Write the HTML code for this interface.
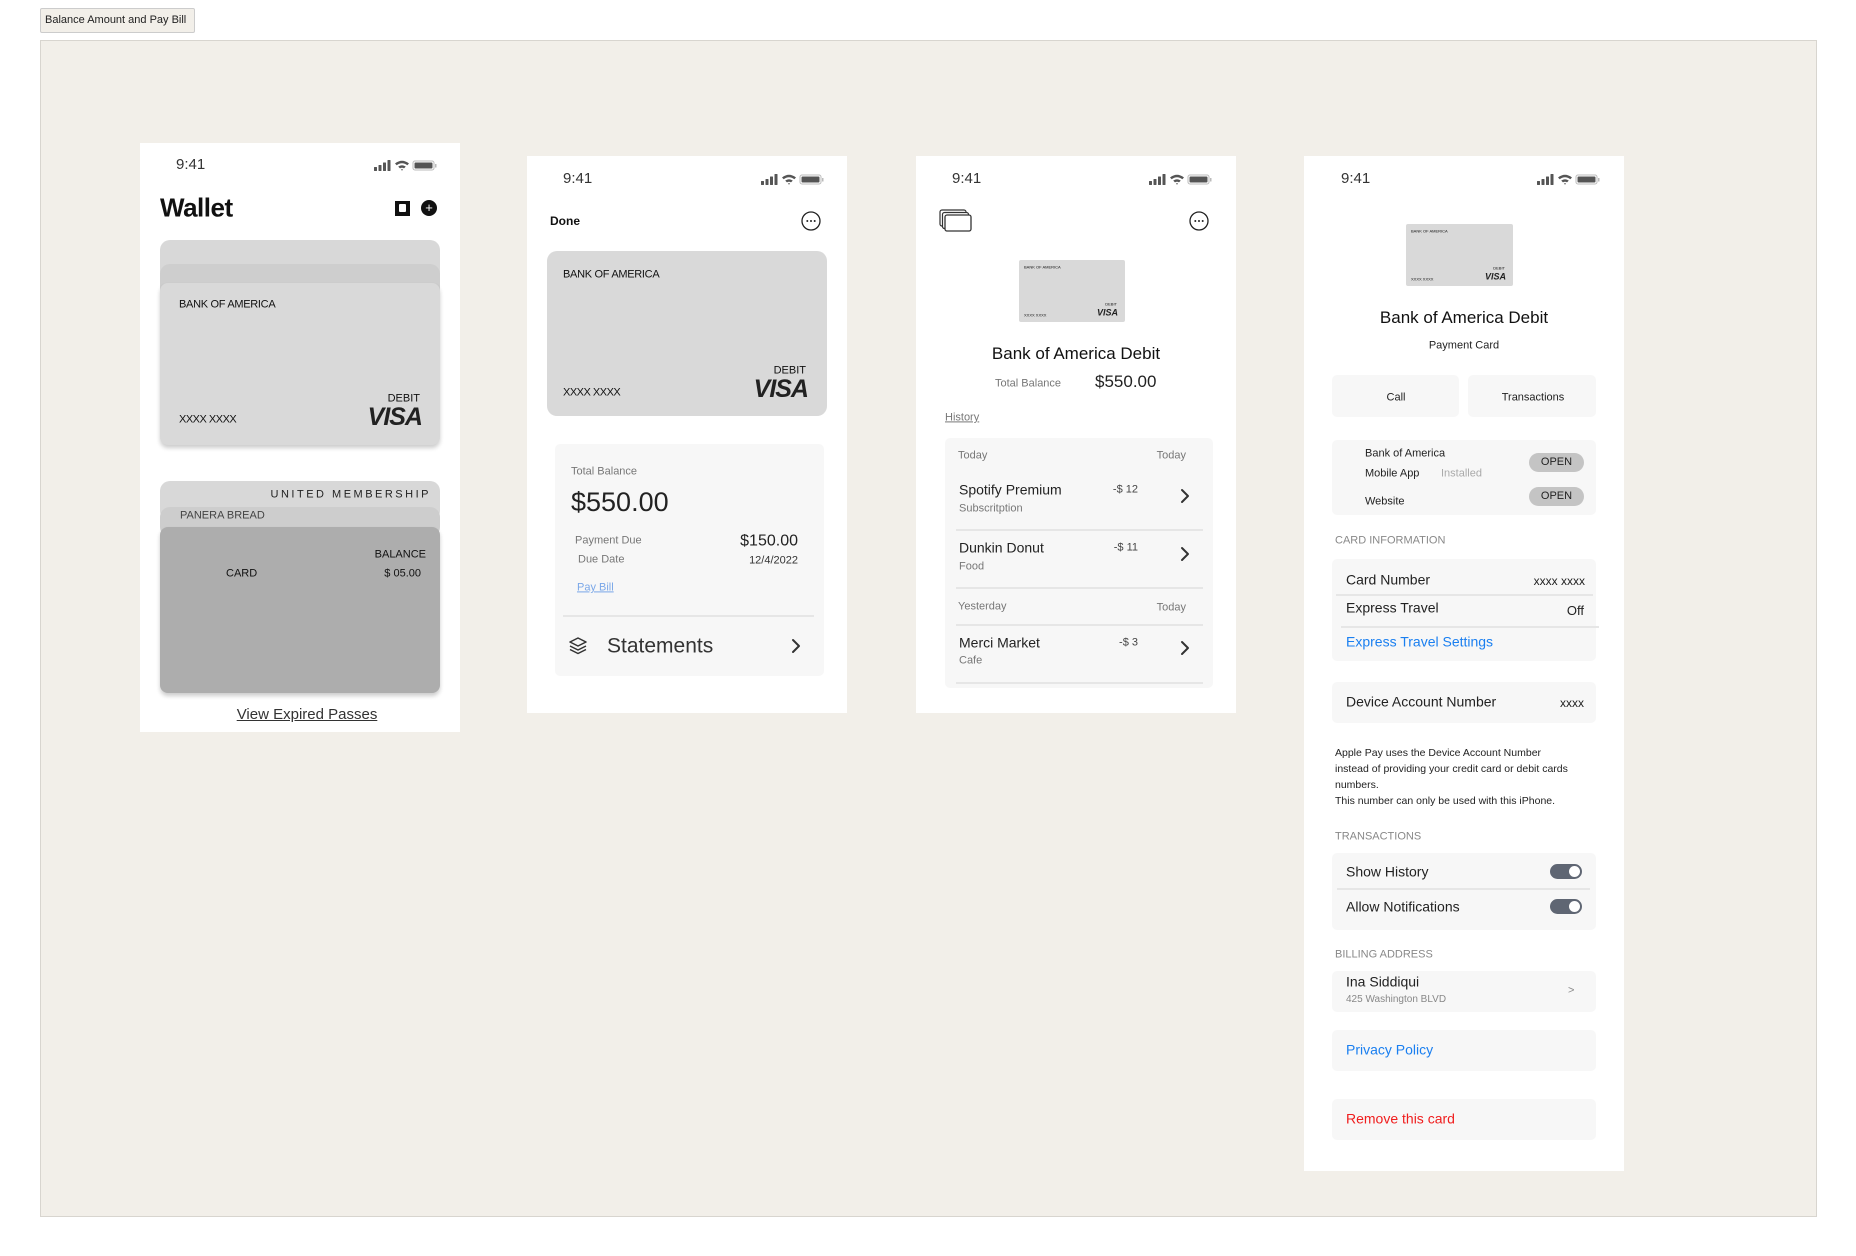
<!DOCTYPE html>
<html><head><meta charset="utf-8"><style>
*{margin:0;padding:0;box-sizing:border-box}
body{width:1856px;height:1256px;background:#fff;position:relative;overflow:hidden;font-family:"Liberation Sans",Arial,sans-serif;color:#111}
.a{position:absolute}
.t{position:absolute;white-space:nowrap;transform:translateY(-50%);line-height:1.2}
.r{transform:translate(-100%,-50%)}
.c{transform:translate(-50%,-50%)}
.ph{position:absolute;background:#fff}
.panel{position:absolute;background:#f7f7f7;border-radius:5px}
.div{position:absolute;height:2px;background:#e6e6e6}
.g{color:#777}
.visa{font-weight:bold;font-style:italic;letter-spacing:-1px;color:#222}
</style></head><body>

<svg width="0" height="0" style="position:absolute"><defs>
<g id="sb">
<rect x="0" y="8" width="3" height="4" rx="0.5" fill="#555"/>
<rect x="4.5" y="6" width="3" height="6" rx="0.5" fill="#555"/>
<rect x="9" y="3.5" width="3" height="8.5" rx="0.5" fill="#555"/>
<rect x="13.5" y="1" width="3" height="11" rx="0.5" fill="#555"/>
<path d="M21 4.5 Q28 -1 35 4.5 L33.3 6.3 Q28 2.2 22.7 6.3Z M24.2 7.6 Q28 4.8 31.8 7.6 L30 9.4 Q28 8 26 9.4Z M27 10.5 L28 11.8 L29 10.5 Q28 9.8 27 10.5Z" fill="#555"/>
<rect x="39" y="2" width="21" height="9" rx="2" fill="none" stroke="#bbb" stroke-width="1"/>
<rect x="40.5" y="3.5" width="18" height="6" rx="1" fill="#555"/>
<rect x="61" y="5" width="1.5" height="3.5" fill="#bbb"/>
</g>
<g id="ell"><circle cx="10" cy="10" r="9" fill="none" stroke="#222" stroke-width="1.3"/><circle cx="6.3" cy="10" r="1" fill="#222"/><circle cx="10" cy="10" r="1" fill="#222"/><circle cx="13.7" cy="10" r="1" fill="#222"/></g>
<g id="chev"><path d="M2 2 L8 8 L2 14" fill="none" stroke="#333" stroke-width="2" stroke-linecap="round" stroke-linejoin="round"/></g>
</defs></svg>

<div class="a" style="left:40px;top:8px;width:155px;height:25px;background:#f2efe9;border:1px solid #ccc;border-radius:2px;font-size:11px;line-height:23px;padding-left:4px;color:#222">Balance Amount and Pay Bill</div>
<div class="a" style="left:40px;top:40px;width:1777px;height:1177px;background:#f2efe9;border:1px solid #d8d5cf"></div>

<!-- PHONE 1 -->
<div class="ph" style="left:140px;top:143px;width:320px;height:589px"></div>
<div class="t" style="left:176px;top:165px;font-size:15px;color:#333">9:41</div>
<svg class="a" style="left:374px;top:159px" width="64" height="13"><use href="#sb"/></svg>
<div class="t" style="left:160px;top:208px;font-size:26px;font-weight:bold;letter-spacing:-0.5px">Wallet</div>
<div class="a" style="left:395px;top:201px;width:15px;height:15px;background:#111"><div class="a" style="left:4px;top:3px;width:7px;height:8px;background:#fff;border-radius:1px"></div></div>
<div class="a" style="left:421px;top:200px;width:16px;height:16px;background:#111;border-radius:50%;color:#fff;font-size:13px;line-height:15px;text-align:center">+</div>
<div class="a" style="left:160px;top:240px;width:280px;height:60px;background:#d8d8d8;border-radius:10px"></div>
<div class="a" style="left:160px;top:264px;width:280px;height:40px;background:#cecece;border-radius:10px"></div>
<div class="a" style="left:160px;top:283px;width:280px;height:162px;background:#d9d9d9;border-radius:8px;box-shadow:0 3px 4px rgba(0,0,0,.2)"></div>
<div class="t" style="left:179px;top:305px;font-size:11px;letter-spacing:-0.3px">BANK OF AMERICA</div>
<div class="t r" style="left:420px;top:399px;font-size:11px">DEBIT</div>
<div class="t r visa" style="left:422px;top:417px;font-size:25px">VISA</div>
<div class="t" style="left:179px;top:420px;font-size:11px;letter-spacing:-0.5px">XXXX XXXX</div>

<div class="a" style="left:160px;top:481px;width:280px;height:40px;background:#d8d8d8;border-radius:10px"></div>
<div class="t r" style="left:431px;top:495px;font-size:11px;letter-spacing:2.5px;color:#222">UNITED MEMBERSHIP</div>
<div class="a" style="left:160px;top:507px;width:280px;height:30px;background:#cdcdcd;border-radius:10px"></div>
<div class="t" style="left:180px;top:516px;font-size:11px;color:#444">PANERA BREAD</div>
<div class="a" style="left:160px;top:527px;width:280px;height:166px;background:#adadad;border-radius:8px;box-shadow:0 3px 4px rgba(0,0,0,.2)"></div>
<div class="t r" style="left:426px;top:555px;font-size:11px">BALANCE</div>
<div class="t" style="left:226px;top:574px;font-size:11px">CARD</div>
<div class="t r" style="left:421px;top:574px;font-size:11px">$ 05.00</div>
<div class="t c" style="left:307px;top:715px;font-size:15px;color:#333;text-decoration:underline">View Expired Passes</div>

<!-- PHONE 2 -->
<div class="ph" style="left:527px;top:156px;width:320px;height:557px"></div>
<div class="t" style="left:563px;top:179px;font-size:15px;color:#333">9:41</div>
<svg class="a" style="left:761px;top:173px" width="64" height="13"><use href="#sb"/></svg>
<div class="t" style="left:550px;top:221px;font-size:12px;font-weight:bold">Done</div>
<svg class="a" style="left:801px;top:211px" width="20" height="20"><use href="#ell"/></svg>
<div class="a" style="left:547px;top:251px;width:280px;height:165px;background:#d9d9d9;border-radius:10px"></div>
<div class="t" style="left:563px;top:275px;font-size:11px;letter-spacing:-0.3px">BANK OF AMERICA</div>
<div class="t r" style="left:806px;top:371px;font-size:11px">DEBIT</div>
<div class="t r visa" style="left:808px;top:389px;font-size:25px">VISA</div>
<div class="t" style="left:563px;top:393px;font-size:11px;letter-spacing:-0.5px">XXXX XXXX</div>
<div class="panel" style="left:555px;top:444px;width:269px;height:232px"></div>
<div class="t g" style="left:571px;top:472px;font-size:11px">Total Balance</div>
<div class="t" style="left:571px;top:502px;font-size:27px;color:#222">$550.00</div>
<div class="t g" style="left:575px;top:541px;font-size:11px">Payment Due</div>
<div class="t r" style="left:798px;top:541px;font-size:16px;color:#222">$150.00</div>
<div class="t g" style="left:578px;top:560px;font-size:11px">Due Date</div>
<div class="t r" style="left:798px;top:561px;font-size:11px;color:#333">12/4/2022</div>
<div class="t" style="left:577px;top:588px;font-size:11px;color:#7aa7e8;text-decoration:underline">Pay Bill</div>
<div class="div" style="left:563px;top:615px;width:251px"></div>
<svg class="a" style="left:569px;top:637px" width="18" height="18" viewBox="0 0 18 18"><path d="M9 1 L17 5 L9 9 L1 5Z M1 9 L9 13 L17 9 M1 12.5 L9 16.5 L17 12.5" fill="none" stroke="#333" stroke-width="1.5" stroke-linejoin="round"/></svg>
<div class="t" style="left:607px;top:646px;font-size:21px;color:#333">Statements</div>
<svg class="a" style="left:791px;top:638px" width="10" height="16"><use href="#chev"/></svg>

<!-- PHONE 3 -->
<div class="ph" style="left:916px;top:156px;width:320px;height:557px"></div>
<div class="t" style="left:952px;top:179px;font-size:15px;color:#333">9:41</div>
<svg class="a" style="left:1149px;top:173px" width="64" height="13"><use href="#sb"/></svg>
<svg class="a" style="left:939px;top:209px" width="34" height="24"><rect x="1" y="1" width="26" height="16" rx="2" fill="#fff" stroke="#333" stroke-width="1.2"/><rect x="3.5" y="3.5" width="26" height="16" rx="2" fill="#fff" stroke="#333" stroke-width="1.2"/><rect x="6" y="6" width="26" height="16" rx="2" fill="#fff" stroke="#333" stroke-width="1.3"/></svg>
<svg class="a" style="left:1189px;top:211px" width="20" height="20"><use href="#ell"/></svg>
<div class="a" style="left:1019px;top:260px;width:106px;height:62px;background:#d9d9d9;border-radius:2px"></div>
<div class="t" style="left:1024px;top:268px;font-size:4px">BANK OF AMERICA</div>
<div class="t r" style="left:1117px;top:305px;font-size:4px">DEBIT</div>
<div class="t r visa" style="left:1118px;top:313px;font-size:9px;letter-spacing:0">VISA</div>
<div class="t" style="left:1024px;top:316px;font-size:4px">XXXX XXXX</div>
<div class="t c" style="left:1076px;top:354px;font-size:17px;font-weight:500;color:#111">Bank of America Debit</div>
<div class="t g" style="left:995px;top:384px;font-size:11px">Total Balance</div>
<div class="t" style="left:1095px;top:382px;font-size:17px;color:#222">$550.00</div>
<div class="t g" style="left:945px;top:418px;font-size:11px;text-decoration:underline">History</div>
<div class="panel" style="left:945px;top:438px;width:268px;height:250px"></div>
<div class="t g" style="left:958px;top:456px;font-size:11px">Today</div>
<div class="t g r" style="left:1186px;top:456px;font-size:11px">Today</div>
<div class="t" style="left:959px;top:490px;font-size:14px;color:#222">Spotify Premium</div>
<div class="t g" style="left:959px;top:509px;font-size:11px">Subscritption</div>
<div class="t r" style="left:1138px;top:490px;font-size:11px;color:#444">-$ 12</div>
<svg class="a" style="left:1180px;top:488px" width="10" height="16"><use href="#chev"/></svg>
<div class="div" style="left:956px;top:529px;width:247px"></div>
<div class="t" style="left:959px;top:548px;font-size:14px;color:#222">Dunkin Donut</div>
<div class="t g" style="left:959px;top:567px;font-size:11px">Food</div>
<div class="t r" style="left:1138px;top:548px;font-size:11px;color:#444">-$ 11</div>
<svg class="a" style="left:1180px;top:546px" width="10" height="16"><use href="#chev"/></svg>
<div class="div" style="left:956px;top:587px;width:247px"></div>
<div class="t g" style="left:958px;top:607px;font-size:11px">Yesterday</div>
<div class="t g r" style="left:1186px;top:608px;font-size:11px">Today</div>
<div class="div" style="left:956px;top:624px;width:247px"></div>
<div class="t" style="left:959px;top:643px;font-size:14px;color:#222">Merci Market</div>
<div class="t g" style="left:959px;top:661px;font-size:11px">Cafe</div>
<div class="t r" style="left:1138px;top:643px;font-size:11px;color:#444">-$ 3</div>
<svg class="a" style="left:1180px;top:640px" width="10" height="16"><use href="#chev"/></svg>
<div class="div" style="left:956px;top:682px;width:247px"></div>

<!-- PHONE 4 -->
<div class="ph" style="left:1304px;top:156px;width:320px;height:1015px"></div>
<div class="t" style="left:1341px;top:179px;font-size:15px;color:#333">9:41</div>
<svg class="a" style="left:1537px;top:173px" width="64" height="13"><use href="#sb"/></svg>
<div class="a" style="left:1406px;top:224px;width:107px;height:62px;background:#d9d9d9;border-radius:2px"></div>
<div class="t" style="left:1411px;top:232px;font-size:4px">BANK OF AMERICA</div>
<div class="t r" style="left:1505px;top:269px;font-size:4px">DEBIT</div>
<div class="t r visa" style="left:1506px;top:277px;font-size:9px;letter-spacing:0">VISA</div>
<div class="t" style="left:1411px;top:280px;font-size:4px">XXXX XXXX</div>
<div class="t c" style="left:1464px;top:318px;font-size:17px;font-weight:500">Bank of America Debit</div>
<div class="t c" style="left:1464px;top:346px;font-size:11px;color:#222">Payment Card</div>
<div class="panel" style="left:1332px;top:375px;width:127px;height:42px"></div>
<div class="t c" style="left:1396px;top:398px;font-size:11px;color:#222">Call</div>
<div class="panel" style="left:1468px;top:375px;width:128px;height:42px"></div>
<div class="t c" style="left:1533px;top:398px;font-size:11px;color:#222">Transactions</div>
<div class="panel" style="left:1332px;top:440px;width:264px;height:75px"></div>
<div class="t" style="left:1365px;top:454px;font-size:11px;color:#222">Bank of America</div>
<div class="t" style="left:1365px;top:474px;font-size:11px;color:#222">Mobile App</div>
<div class="t" style="left:1441px;top:474px;font-size:11px;color:#aaa">Installed</div>
<div class="t" style="left:1365px;top:502px;font-size:11px;color:#222">Website</div>
<div class="a" style="left:1529px;top:453px;width:55px;height:19px;background:#c4c4c4;border-radius:10px;font-size:11px;line-height:19px;text-align:center;color:#222">OPEN</div>
<div class="a" style="left:1529px;top:487px;width:55px;height:19px;background:#c4c4c4;border-radius:10px;font-size:11px;line-height:19px;text-align:center;color:#222">OPEN</div>
<div class="t" style="left:1335px;top:541px;font-size:11px;color:#888">CARD INFORMATION</div>
<div class="panel" style="left:1332px;top:559px;width:264px;height:102px"></div>
<div class="t" style="left:1346px;top:580px;font-size:14px;color:#222">Card Number</div>
<div class="t r" style="left:1585px;top:581px;font-size:12px;color:#222">xxxx xxxx</div>
<div class="div" style="left:1336px;top:594px;width:257px"></div>
<div class="t" style="left:1346px;top:608px;font-size:14px;color:#222">Express Travel</div>
<div class="t r" style="left:1584px;top:611px;font-size:13px;color:#222">Off</div>
<div class="div" style="left:1341px;top:626px;width:258px"></div>
<div class="t" style="left:1346px;top:642px;font-size:14px;color:#1a7ff0">Express Travel Settings</div>
<div class="panel" style="left:1332px;top:682px;width:264px;height:41px"></div>
<div class="t" style="left:1346px;top:702px;font-size:14px;color:#222">Device Account Number</div>
<div class="t r" style="left:1584px;top:703px;font-size:12px;color:#222">xxxx</div>
<div class="a" style="left:1335px;top:745px;font-size:10.5px;line-height:16px;color:#222;width:238px">Apple Pay uses the Device Account Number instead of providing your credit card or debit cards numbers.<br><span style="white-space:nowrap">This number can only be used with this iPhone.</span></div>
<div class="t" style="left:1335px;top:837px;font-size:11px;color:#888">TRANSACTIONS</div>
<div class="panel" style="left:1332px;top:853px;width:264px;height:77px"></div>
<div class="t" style="left:1346px;top:872px;font-size:14px;color:#222">Show History</div>
<div class="div" style="left:1337px;top:888px;width:253px"></div>
<div class="t" style="left:1346px;top:907px;font-size:14px;color:#222">Allow Notifications</div>
<div class="a" style="left:1550px;top:864px;width:32px;height:15px;background:#5f6673;border-radius:8px"><div class="a" style="right:2px;top:2px;width:11px;height:11px;background:#fff;border-radius:50%"></div></div>
<div class="a" style="left:1550px;top:899px;width:32px;height:15px;background:#5f6673;border-radius:8px"><div class="a" style="right:2px;top:2px;width:11px;height:11px;background:#fff;border-radius:50%"></div></div>
<div class="t" style="left:1335px;top:955px;font-size:11px;color:#888">BILLING ADDRESS</div>
<div class="panel" style="left:1332px;top:971px;width:264px;height:41px"></div>
<div class="t" style="left:1346px;top:982px;font-size:14px;color:#222">Ina Siddiqui</div>
<div class="t" style="left:1346px;top:1000px;font-size:10px;color:#888">425 Washington BLVD</div>
<div class="t" style="left:1568px;top:991px;font-size:11px;color:#888">&gt;</div>
<div class="panel" style="left:1332px;top:1030px;width:264px;height:41px"></div>
<div class="t" style="left:1346px;top:1050px;font-size:14px;color:#1a7ff0">Privacy Policy</div>
<div class="panel" style="left:1332px;top:1099px;width:264px;height:41px"></div>
<div class="t" style="left:1346px;top:1119px;font-size:14px;color:#f01d1d">Remove this card</div>

</body></html>
